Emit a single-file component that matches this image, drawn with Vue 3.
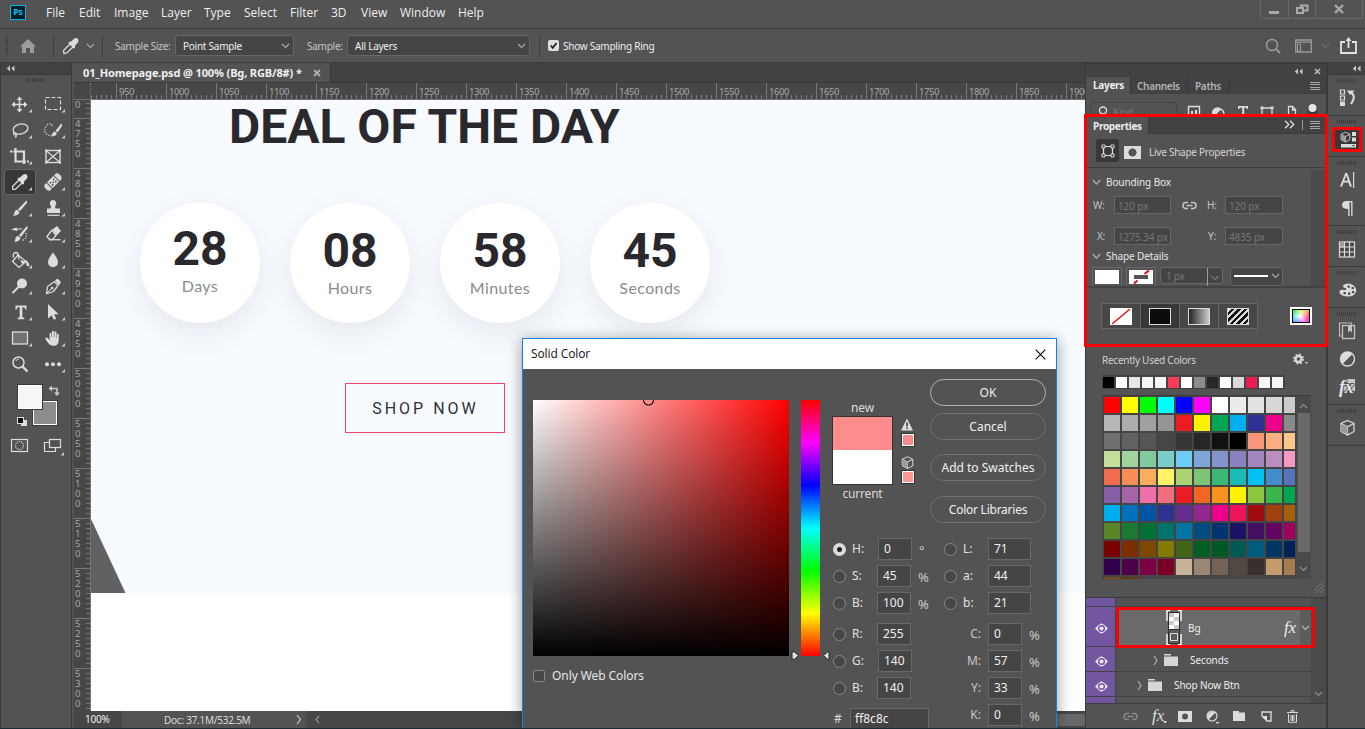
<script setup>
const menus = ['File', 'Edit', 'Image', 'Layer', 'Type', 'Select', 'Filter', '3D', 'View', 'Window', 'Help']

const L = '#dcdcdc'
const dropper = `<path d="M9 20.500L8.500 17.500L15.500 10.500L18.500 13.500L11.500 20.200Z" fill="none" stroke="${L}" stroke-width="1.300"/><path d="M14 9L16 8.500L19 5.800Q21.500 4.300 23 6Q24.500 8 22.500 10L20 12.800L20 15L18.700 15.500L13.500 10.300Z" fill="${L}"/>`
const tools = [
  { id: 'move', art: `<path d="M15.500 7v13M9 13.500h13" stroke="${L}" stroke-width="1.500"/><path d="M15.500 5.500l3 3.500h-6zM15.500 21.500l3-3.500h-6zM7.500 13.500l3.500-3v6zM23.500 13.500l-3.500-3v6z" fill="${L}"/>` },
  { id: 'marquee', art: `<rect x="8.500" y="6.500" width="15" height="12" fill="none" stroke="${L}" stroke-width="1.200" stroke-dasharray="4 2"/>` },
  { id: 'lasso', art: `<ellipse cx="16.500" cy="12" rx="7.500" ry="5" transform="rotate(-12 16.500 12)" fill="none" stroke="${L}" stroke-width="1.400"/><path d="M10 15.500q-1.500 2 1 2.500q2 0 .5-2M12 17.500q1 2-1 3" fill="none" stroke="${L}" stroke-width="1.200"/>` },
  { id: 'quick', art: `<path d="M15.500 8.500q-3-3.500-6 0q-3.500 5 0 8.500q2.500 2.500 5 .5" fill="none" stroke="${L}" stroke-width="1.200" stroke-dasharray="1.300 1.300"/><path d="M25 6.500V9L20.500 15.500L18.500 13.800L23.800 7.300Z" fill="${L}"/><path d="M17.800 14.500l2 2q-.8 3-6 3q2-1.500 1.800-3.500q.8-1.500 2.200-1.500z" fill="${L}"/>` },
  { id: 'crop', art: `<path d="M9.500 8.500h10.500v12.500M11.500 5v13.500H22" fill="none" stroke="${L}" stroke-width="2.200"/><path d="M6 7.500h2.500v2H6zM23 17.500h2v2h-2z" fill="${L}"/>` },
  { id: 'frame', art: `<rect x="9" y="7.500" width="14" height="12" fill="none" stroke="${L}" stroke-width="1.400"/><path d="M9 7.500l14 12M23 7.500l-14 12" stroke="${L}" stroke-width="1.200"/><path d="M8 6.500h2v2H8zM22 6.500h2v2h-2zM8 18.500h2v2H8zM22 18.500h2v2h-2z" fill="${L}"/>`, flat: true },
  { id: 'eyedropper', art: dropper, on: true },
  { id: 'heal', art: `<g transform="rotate(-45 16 13)"><path d="M10 9.500H9q-2.500 0-2.500 3.500T9 16.500h1zM22 9.500h1q2.500 0 2.500 3.500T23 16.500h-1z" fill="${L}" stroke="${L}"/><rect x="11.500" y="9" width="9" height="8" fill="${L}"/><path d="M13 11h1.500v1.500H13zM17.500 11H19v1.500h-1.500zM13 14h1.500v1.500H13zM17.500 14H19v1.500h-1.500zM15.300 12.500h1.400v1.400h-1.400z" fill="#444"/></g>` },
  { id: 'brush', art: `<path d="M23 5.500V8L16 16L14 14.200L21.500 6.500Z" fill="${L}"/><path d="M13.200 14.800l2.300 2.200q-.8 4-6.800 3.800q2-1.500 1.700-3.600q.8-2.300 2.800-2.400z" fill="${L}"/>` },
  { id: 'stamp', art: `<path d="M16 5a3.300 3.300 0 0 1 2.500 5.500q-1 2 .2 3H23v4.500H10v-4.500h3.500q1-1 .1-3A3.300 3.300 0 0 1 16 5z" fill="${L}"/><path d="M10.500 20.300h12" stroke="${L}" stroke-width="1.200"/>` },
  { id: 'history', art: `<path d="M23.500 5V7.500L17 16L15 14.200L22 6Z" fill="${L}"/><path d="M14.200 14.800l2.300 2.200q-.8 4-6.500 3.800q1.700-1.500 1.400-3.600q.8-2.300 2.800-2.400zM7 8.500l5.500-2l1 3.500z" fill="${L}"/><path d="M12 8h6" stroke="${L}"/><path d="M22 12q2 5-4 7.500" fill="none" stroke="${L}" stroke-width="1.200" stroke-dasharray="1.300 1.300"/>` },
  { id: 'eraser', art: `<path d="M15.500 8.500L20 5L24 10L19.500 14.500Z" fill="${L}"/><path d="M15 9L10 15.500L12.500 18.500H15.500L19 14.500Z" fill="none" stroke="${L}" stroke-width="1.300"/><path d="M12 18.700h11.500" stroke="${L}" stroke-width="1.300"/>` },
  { id: 'bucket', art: `<path d="M14 8L22 14.500L15 20.500L8.500 14.500Z" fill="none" stroke="${L}" stroke-width="1.300"/><path d="M21.500 13q3.500 1.500 4 6q-2.500 1-3-1zM16 13l5.500 1.500l-3 3z" fill="${L}"/><path d="M9.500 10.500q-1-5 2.500-5q3 .3 3 7" fill="none" stroke="${L}" stroke-width="1.300"/>` },
  { id: 'blur', art: `<path d="M16 5.500q5 6.500 5 9.800a5 5 0 0 1-10 0q0-3.300 5-9.800z" fill="${L}"/>` },
  { id: 'dodge', art: `<circle cx="18" cy="10.500" r="5" fill="${L}"/><path d="M15 13.500l-6.500 6.500" stroke="${L}" stroke-width="2"/>` },
  { id: 'pen', art: `<path d="M9.500 20.500L10.500 13.500L17.500 8.500L21 12.500L16.500 18.500Z" fill="none" stroke="${L}" stroke-width="1.300"/><path d="M18 7.500L20.500 5.500L24 9L22 12.500ZM14 14h2.300v2.300H14z" fill="${L}"/><path d="M9.500 20.500l5-5" stroke="${L}"/>` },
  { id: 'type', art: `<path d="M11.500 6.500h11v4h-1.200q-.3-2.300-1.500-2.300h-1.500v9.600q0 1 2 1v1.500h-6.600v-1.500q2 0 2-1V8.200h-1.500q-1.200 0-1.500 2.300h-1.200z" fill="${L}"/>` },
  { id: 'select', art: `<path d="M11 5v14.500l3.600-3.300l2.300 4.600l2.300-1.100l-2.200-4.500h4.700z" fill="${L}"/>` },
  { id: 'rect', art: `<rect x="8.500" y="7" width="15" height="12" fill="#737373" stroke="${L}" stroke-width="1.300"/>` },
  { id: 'hand', art: `<path d="M12.500 19.500Q9 15.500 8.300 13.500q.5-1.600 2.300-.5l2 2V8.500q1-1.500 1.800 0V12h.5V6.500q1-1.500 2 0V12h.5V7q1-1.500 2 0v5.500h.5V9.500q1-1.300 1.900 0V15q0 3.500-2.500 5.500q-4.300 1-6.800-1z" fill="${L}"/>` },
  { id: 'zoom', art: `<circle cx="14.500" cy="11.500" r="5.500" fill="none" stroke="${L}" stroke-width="1.500"/><path d="M18.500 15.500l5 5" stroke="${L}" stroke-width="2.400"/><path d="M12 10a3 3 0 0 1 3-2" fill="none" stroke="${L}"/>`, flat: true },
  { id: 'more', art: `<circle cx="10" cy="13.300" r="2" fill="${L}"/><circle cx="16" cy="13.300" r="2" fill="${L}"/><circle cx="22" cy="13.300" r="2" fill="${L}"/>` },
]

const hTicks = Array.from({ length: 20 }, (_, i) => 950 + i * 50)
const vTicks = ['0', ...Array.from({ length: 12 }, (_, i) => String(4750 + i * 50))]

const timers = [['28', 'Days'], ['08', 'Hours'], ['58', 'Minutes'], ['45', 'Seconds']]
const leftRows = [['H:', '0', '°'], ['S:', '45', '%'], ['B:', '100', '%'], ['R:', '255', ''], ['G:', '140', ''], ['B:', '140', '']]
const labRows = [['L:', '71'], ['a:', '44'], ['b:', '21']]
const cmykRows = [['C:', '0'], ['M:', '57'], ['Y:', '33'], ['K:', '0']]

const recent = ['#000', '#fff', '#e6e6e6', '#f6f6f6', '#f6f6f6', '#ff3c55', '#fff', '#8c8c8c', '#282828', '#fff', '#d8d8d8', '#e91e50', '#f6f6f6', '#f6f6f6']
const swatches = [
  '#ff0000 #ffff00 #00ff00 #00ffff #0000ff #ff00ff #ffffff #ebebeb #e1e1e1 #d7d7d7 #cccccc',
  '#b7b7b7 #acacac #a0a0a0 #959595 #ed1c24 #fff200 #00a651 #00aeef #2e3192 #ec008c #898989',
  '#707070 #626262 #555555 #464646 #363636 #262626 #111111 #000000 #f7977a #f9ad81 #fdc68a',
  '#c4df9b #a2d39c #82ca9d #7bcdc8 #6ecff6 #7ea7d8 #8493ca #8882be #a187be #bc8dbf #f49ac2',
  '#f26c4f #f68e55 #fbaf5c #fff467 #acd373 #7cc576 #3bb878 #1abbb4 #00bff3 #438cca #5574b9',
  '#855fa8 #a763a8 #f06ea9 #f26d7d #ed1c24 #f26522 #f7941d #fff200 #8dc73f #39b54a #00a651',
  '#00aeef #0072bc #0054a6 #2e3192 #662d91 #92278f #ec008c #ed145b #9e0b0f #a0410d #a36209',
  '#598527 #1a7b30 #007236 #00746b #0076a3 #004b80 #003471 #1b1464 #440e62 #630460 #9e005d',
  '#790000 #7b2e00 #7d4900 #827b00 #406618 #005e20 #005826 #005952 #005b7f #003663 #002157',
  '#32004b #4b0049 #7b0046 #7a0026 #c7b299 #998675 #736357 #534741 #37302d #c69c6d #a67c52',
  '#754c24 #603913',
].map(r => r.split(' '))

const eye = '<path d="M1 6Q6 .5 8 .5T15 6Q10 11.500 8 11.500T1 6z" fill="#eee6f8"/><circle cx="8" cy="6" r="3.900" fill="#7356a0"/><circle cx="8" cy="6" r="2.300" fill="#eee6f8"/>'
const cube = '<path d="M8 1l6.500 3v8L8 15.500L1.500 12V4z" fill="none" stroke="#dcdcdc" stroke-width="1.200"/><path d="M1.500 4L8 7.300L14.500 4M8 7.300v8" fill="none" stroke="#dcdcdc" stroke-width="1.200"/><path d="M2 4.500L8 7.500V15L2 12z" fill="#9a9a9a"/>'
const dock = [
  [{ id: 'history', art: '<path d="M2.500 2h4v4h-4zM2.500 8h4v4h-4z" fill="none" stroke="#dcdcdc" stroke-width="1.200"/><path d="M2 13.500h5V18H2zM9 2.500h7.500L12 7z" fill="#dcdcdc"/><path d="M12 4q7 3 1 12" fill="none" stroke="#dcdcdc" stroke-width="2"/>' }],
  [{ id: 'props', art: '<g transform="translate(1 1.500) scale(.68)">' + cube + '</g><path d="M13 2h4v4h-4zM13 7.500h4v4h-4zM2 14h15v3.500H2z" fill="#dcdcdc"/><path d="M13 15h3l-1.500 1.500z" fill="#333"/>' }],
  [{ id: 'char', art: '<path d="M2 16.500L7.300 3h1.900l4.800 13.500h-2.200l-1.400-4H5.600l-1.500 4zM6.200 10.700h3.700L8.200 5.500zM15 2h1.200v16H15z" fill="#dcdcdc"/>' },
    { id: 'para', art: '<path d="M14.500 3v15h-1.300V4.300H11.500V18h-1.300v-7Q4 11 4 7t5-4z" fill="#dcdcdc"/>' }],
  [{ id: 'grid', art: '<rect x="1.500" y="2" width="15" height="15" fill="#474747" stroke="#dcdcdc" stroke-width="1.200"/><path d="M2 2.500h5v5H2z" fill="#9a9a9a"/><path d="M6.500 2v15M11.500 2v15M1.500 7h15M1.500 12h15" stroke="#dcdcdc" stroke-width="1.200"/>' }],
  [{ id: 'palette', art: '<path d="M5 5.500Q9 2 14 4.500q5 3 4 7.500q-2 4.500-8 4.500q-7 0-8.500-4q0-3.500 4-2.500q3.500.5 2.500-2q-3 .5-3-2.500z" fill="#dcdcdc"/><path d="M9.500 5.500h2.300v2.300H9.500zM13.500 7h2.300v2.300h-2.300zM14 11h2.300v2.300H14zM10 12.500h2.300v2.300H10zM5.500 12h2.300v2.300H5.500z" fill="#4a4a4a"/>' }],
  [{ id: 'lib', art: '<path d="M4 15H1.500V2h12v2" fill="none" stroke="#b8b8b8" stroke-width="1.200"/><rect x="4.500" y="4.500" width="12" height="13" fill="none" stroke="#c4c4c4" stroke-width="1.300"/><path d="M10 5h4v6.500l-2-1.800l-2 1.800z" fill="#c4c4c4"/>' },
    { id: 'adjust', art: '<circle cx="9.500" cy="10" r="7" fill="none" stroke="#dcdcdc" stroke-width="1.400"/><path d="M14.500 5a7 7 0 0 0-10 10z" fill="#dcdcdc"/>' },
    { id: 'styles', art: '<path d="M5 2h12v12H5z" fill="#c8c8c8"/><text x="1" y="15.500" font-size="18" font-style="italic" font-weight="bold" font-family="Liberation Serif, serif" fill="#e6e6e6" stroke="#535353" stroke-width="2" paint-order="stroke">fx</text>' }],
  [{ id: 'cube', art: '<g transform="translate(1.500 1.500)">' + cube + '</g>' }],
]
</script>

<template>
  <div class="app">
    <header class="menubar">
      <div class="ps">Ps</div>
      <nav class="menus"><span v-for="m in menus" :key="m">{{ m }}</span></nav>
      <div class="winbtns">
        <i><svg width="27" height="18"><path d="M8 11h10v3H8z" fill="#a9a9a9" /></svg></i>
        <i><svg width="26" height="18"><path d="M8 8h6v5H8zM12 8V5.500h6.500v5H14" fill="none" stroke="#a9a9a9" stroke-width="2" /></svg></i>
        <i><svg width="47" height="18"><path d="M19 5l8 8M27 5l-8 8" stroke="#a9a9a9" stroke-width="2.400" /></svg></i>
      </div>
    </header>

    <div class="options">
      <div class="vgrip"></div>
      <svg class="home" width="18" height="16"><path d="M9 1L17 8.500H15V15H11V10H7V15H3V8.500H1Z" fill="#9c9c9c" /></svg>
      <b class="sep"></b>
      <svg class="drop" width="18" height="18" viewBox="7 4 18 18" v-html="dropper"></svg>
      <svg class="chev" width="9" height="6"><path d="M1 1l3.500 3.500L8 1" fill="none" stroke="#a8a8a8" stroke-width="1.200" /></svg>
      <b class="sep sep2"></b>
      <span class="lab">Sample Size:</span>
      <div class="sel w1"><span>Point Sample</span><svg width="9" height="6"><path d="M1 1l3.500 3.500L8 1" fill="none" stroke="#a8a8a8" stroke-width="1.200" /></svg></div>
      <span class="lab l2">Sample:</span>
      <div class="sel w2"><span>All Layers</span><svg width="9" height="6"><path d="M1 1l3.500 3.500L8 1" fill="none" stroke="#a8a8a8" stroke-width="1.200" /></svg></div>
      <b class="sep sep3"></b>
      <svg class="check" width="11" height="11"><rect width="11" height="11" rx="2" fill="#dedede" /><path d="M2.800 5.500l2 2.300L8.500 3" fill="none" stroke="#222" stroke-width="1.800" /></svg>
      <span class="ring">Show Sampling Ring</span>
      <svg class="find" width="16" height="16"><circle cx="7" cy="7" r="5.500" fill="none" stroke="#9a9a9a" stroke-width="1.400" /><path d="M11 11l4 4" stroke="#9a9a9a" stroke-width="1.800" /></svg>
      <svg class="space" width="17" height="14"><path d="M.7 1h15.600v12H.7zM1 3.200h15" fill="none" stroke="#9a9a9a" stroke-width="1.300" /><path d="M2.500 5h3v7h-3z" fill="none" stroke="#9a9a9a" /></svg>
      <svg class="dim" width="9" height="6"><path d="M1 1l3.500 3.500L8 1" fill="none" stroke="#6e6e6e" stroke-width="1.200" /></svg>
      <svg class="share" width="17" height="17"><path d="M5 5H1v11h15V5h-4M8.500 11V2" fill="none" stroke="#e2e2e2" stroke-width="1.800" /><path d="M5.500 4L8.500 0l3 4z" fill="#e2e2e2" /></svg>
    </div>

    <main class="main">
      <aside class="toolbar">
        <div class="colhead"><svg width="9" height="7"><path d="M4 .5L.8 3.500L4 6.500zM8.500 .5L5.300 3.500L8.500 6.500z" fill="#c6c6c6" /></svg></div>
        <div class="grip"></div>
        <div class="tools">
          <div v-for="t in tools" :key="t.id" class="tool" :class="{ on: t.on }">
            <svg width="32" height="26"><g v-html="t.art"></g><path v-if="!t.flat" d="M28 18v3.500h-3.500z" fill="#c8c8c8" /></svg>
          </div>
        </div>
        <svg class="colors" width="60" height="78">
          <rect x="28.500" y="18.500" width="25" height="25" fill="#8c8c8c" stroke="#3b3b3b" /><rect x="29.500" y="19.500" width="23" height="23" fill="none" stroke="#fff" />
          <rect x="13.500" y="2.500" width="25" height="25" fill="#f6f6f6" stroke="#3b3b3b" /><rect x="14.500" y="3.500" width="23" height="23" fill="none" stroke="#fff" />
          <path d="M47 6.500h6V11" fill="none" stroke="#c8c8c8" stroke-width="1.600" /><path d="M44.500 6.500L48 3.500v6zM53 14l-3-3.500h6z" fill="#c8c8c8" />
          <path d="M17 38h6v6h-6z" fill="#dcdcdc" /><rect x="13.500" y="35.500" width="6" height="6" fill="#111" stroke="#ddd" />
          <rect x="7.500" y="57.500" width="16" height="12" fill="none" stroke="#dcdcdc" stroke-width="1.200" /><circle cx="15.500" cy="63.500" r="4" fill="none" stroke="#dcdcdc" stroke-dasharray="1 1" stroke-width="1.200" />
          <rect x="45.500" y="57.500" width="11" height="8" fill="none" stroke="#dcdcdc" stroke-width="1.200" /><path d="M45 60.500h-4.500v9h11V66" fill="none" stroke="#dcdcdc" stroke-width="1.200" /><path d="M60 70v3.500h-3.500z" fill="#c8c8c8" />
        </svg>
      </aside>

      <section class="doc">
        <div class="tabs"><div class="tab"><span>01_Homepage.psd @ 100% (Bg, RGB/8#) *</span><svg width="8" height="8"><path d="M1 1l6 6M7 1L1 7" stroke="#b0b0b0" stroke-width="1.800" /></svg></div></div>
        <div class="hruler"><div class="corner"></div><div class="htrack"><span v-for="n in hTicks" :key="n">{{ n }}</span></div></div>
        <div class="mid">
          <div class="vruler"><span v-for="n in vTicks" :key="n"><em v-for="(d, i) in n" :key="i">{{ d }}</em></span></div>
          <div class="canvas">
            <h1>DEAL OF THE DAY</h1>
            <div class="timers">
              <div v-for="t in timers" :key="t[1]" class="timer" :class="t[1].toLowerCase()"><strong>{{ t[0] }}</strong><span>{{ t[1] }}</span></div>
            </div>
            <div class="shop">SHOP NOW</div>
            <svg class="wedge" width="35" height="74"><path d="M0 0L34.500 74H0Z" fill="#606163" /></svg>
          </div>
        </div>
        <div class="status"><span class="pct">100%</span><span class="size">Doc: 37.1M/532.5M</span><svg width="6" height="11"><path d="M1 1l3.500 4.500L1 10" fill="none" stroke="#c8c8c8" stroke-width="1.200" /></svg><div class="hscroll"><svg width="5" height="9"><path d="M4 1L1 4.500L4 8" fill="none" stroke="#8c8c8c" stroke-width="1.200" /></svg><i></i></div></div>
      </section>

      <aside class="panels">
        <div class="phead"><svg width="9" height="7"><path d="M4 .5L.8 3.500L4 6.500zM8.500 .5L5.300 3.500L8.500 6.500z" fill="#c6c6c6" /></svg><svg width="7" height="7"><path d="M1 1l5 5M6 1L1 6" stroke="#b8b8b8" stroke-width="1.700" /></svg></div>
        <div class="ptabs"><b>Layers</b><span class="ch">Channels</span><span class="pa">Paths</span><i class="burger"></i></div>
        <div class="filter">
          <div class="kind"><svg width="10" height="12"><circle cx="5" cy="5.500" r="3.500" fill="none" stroke="#dcdcdc" stroke-width="1.400" /></svg>Kind</div>
          <svg width="134" height="20"><path d="M1.500 20V5.500h11V20M26.500 13a5 5 0 0 1 10.500 0" fill="none" stroke="#dcdcdc" stroke-width="1.400" /><path d="M34.500 8a5 5 0 0 0-8 8zM4 10h2v3H4zM8 9h2v4H8zM51 5h10v3h-1.500V6.800h-2.300V20h-2V6.800h-2.700V8H51z" fill="#dcdcdc" /><path d="M76 7h8M75 9v9M85 9v9M101.500 18V5.500h4l3 3V18M105.500 5v4h3.500" fill="none" stroke="#dcdcdc" stroke-width="1.300" /><path d="M73.500 5.500h3v3h-3zM83.500 5.500h3v3h-3z" fill="#dcdcdc" /><rect x="121" y="3" width="9" height="18" rx="4" fill="#3c3c3c" /><circle cx="125.500" cy="7" r="4" fill="#e6e6e6" /></svg>
        </div>

        <div class="props">
          <div class="ptabs prop"><b>Properties</b><svg width="11" height="9"><path d="M1 .8L4.800 4.500L1 8.200M6 .8L9.800 4.500L6 8.200" fill="none" stroke="#e0e0e0" stroke-width="1.300" /></svg><em></em><i class="burger"></i></div>
          <div class="live">
            <div class="box"><svg width="14" height="14"><path d="M2.500 2.500h9v9h-9z" fill="none" stroke="#dcdcdc" stroke-width="1.200" /><path d="M1 1h3v3H1zM10 1h3v3h-3zM1 10h3v3H1zM10 10h3v3h-3z" fill="#383838" stroke="#dcdcdc" /></svg></div>
            <div class="mask"></div><span>Live Shape Properties</span>
          </div>
          <div class="scrollarea">
            <div class="fields">
              <div class="sect"><svg width="9" height="7"><path d="M.8 1l3.700 4L8.200 1" fill="none" stroke="#b0b0b0" stroke-width="1.200" /></svg>Bounding Box</div>
              <div class="frow r1"><label>W:</label><div class="inp">120 px</div><svg width="15" height="9"><path d="M6 1.500H4a3 3 0 0 0 0 6h2M9 1.500h2a3 3 0 0 1 0 6H9M4.500 4.500h6" fill="none" stroke="#c6c6c6" stroke-width="1.500" /></svg><label class="h">H:</label><div class="inp">120 px</div></div>
              <div class="frow r2"><label>X:</label><div class="inp">1275.34 px</div><label class="h">Y:</label><div class="inp">4835 px</div></div>
              <div class="sect details"><svg width="9" height="7"><path d="M.8 1l3.700 4L8.200 1" fill="none" stroke="#b0b0b0" stroke-width="1.200" /></svg>Shape Details</div>
              <div class="strokes">
                <div class="sw"><i></i></div>
                <div class="sw"><svg width="24" height="14"><path d="M0 0h24v14H0z" fill="#fff" /><path d="M5 13.500L8.500 10.500M15.500 4L20 .5" stroke="#e01818" stroke-width="2.200" /><path d="M5 5h14v4H5z" fill="#535353" /></svg></div>
                <div class="one"><span>1 px</span><svg width="15" height="18"><path d="M.5 0v18M4.500 8l3.500 3.500L11.500 8" fill="none" stroke="#9c9c9c" /></svg></div>
                <div class="line"><i></i><svg width="9" height="6"><path d="M1 1l3.500 3.500L8 1" fill="none" stroke="#a8a8a8" stroke-width="1.200" /></svg></div>
              </div>
            </div>
            <div class="track"></div>
          </div>
          <div class="fills">
            <div class="seg"><svg width="22" height="17"><path d="M0 0h22v17H0z" fill="#fff" /><path d="M2 16L20 1" stroke="#e01818" stroke-width="1.600" /></svg></div>
            <div class="seg on"><i class="solid"></i></div>
            <div class="seg"><i class="grad"></i></div>
            <div class="seg"><i class="pat"></i></div>
            <div class="pick"><i></i></div>
          </div>
          <div class="frame"></div>
        </div>

        <div class="recent">
          <div class="rtitle"><span>Recently Used Colors</span><svg width="16" height="12"><circle cx="5.500" cy="6" r="3" fill="none" stroke="#d8d8d8" stroke-width="2.400" /><circle cx="5.500" cy="6" r="4.700" fill="none" stroke="#d8d8d8" stroke-width="1.600" stroke-dasharray="1.850 1.850" /><path d="M12 9h3l-1.500 2z" fill="#d8d8d8" /></svg></div>
          <div class="rrow"><i v-for="(c, i) in recent" :key="i" :style="{ background: c }"></i></div>
          <div class="swbox">
            <div class="grid"><div v-for="(r, i) in swatches" :key="i" class="srow"><i v-for="(c, k) in r" :key="k" :style="{ background: c }"></i></div></div>
            <div class="sbar"><svg width="9" height="6"><path d="M1 5l3.500-3.500L8 5" fill="none" stroke="#8c8c8c" stroke-width="1.200" /></svg><i></i><svg width="9" height="6"><path d="M1 1l3.500 3.500L8 1" fill="none" stroke="#8c8c8c" stroke-width="1.200" /></svg></div>
          </div>
          <svg class="resize" width="11" height="11"><path d="M1 9L9 1M3 11L11 3M7 11l4-4" stroke="#7c7c7c" /></svg>
        </div>

        <div class="layers">
          <div class="lrows">
            <div class="lrow first"><div class="eye"></div></div>
            <div class="lrow active">
              <div class="eye"><svg width="15" height="11" viewBox="0 0 16 12" v-html="eye"></svg></div>
              <div class="lbody">
                <svg class="thumb" width="16" height="37"><path d="M1 12V1.500h3M12 1.500h3V12M1 25v10.500h3M12 35.500h3V25" fill="none" stroke="#fff" stroke-width="1.400" /><rect x="2.500" y="3.500" width="11" height="31" fill="#5c5c5c" stroke="#2c2c2c" /><path d="M3 4h10v16H3z" fill="#fff" /><path d="M3 4h5v4H3zM8 8h5v4H8zM3 12h5v4H3zM8 16h5v4H8z" fill="#c9c9c9" /><path d="M2 20.500h12" stroke="#2c2c2c" /><path d="M4.500 24.500h7v7h-7z" fill="none" stroke="#dcdcdc" /></svg>
                <span>Bg</span><em>fx</em><svg class="cv" width="9" height="6"><path d="M1 1l3.500 3.500L8 1" fill="none" stroke="#b8b8b8" stroke-width="1.200" /></svg>
              </div>
            </div>
            <div class="lrow g1"><div class="eye"><svg width="15" height="11" viewBox="0 0 16 12" v-html="eye"></svg></div><div class="lbody"><svg class="gt" width="5" height="11"><path d="M1 1l3 4.500L1 10" fill="none" stroke="#b0b0b0" stroke-width="1.200" /></svg><svg class="fold" width="14" height="12"><path d="M0 0h7v1.500H0zM0 2.500h14V12H0z" fill="#d6d6d6" /></svg><span>Seconds</span></div></div>
            <div class="lrow g2"><div class="eye"><svg width="15" height="11" viewBox="0 0 16 12" v-html="eye"></svg></div><div class="lbody"><svg class="gt" width="5" height="11"><path d="M1 1l3 4.500L1 10" fill="none" stroke="#b0b0b0" stroke-width="1.200" /></svg><svg class="fold" width="14" height="12"><path d="M0 0h7v1.500H0zM0 2.500h14V12H0z" fill="#d6d6d6" /></svg><span>Shop Now Btn</span></div></div>
            <div class="lrow last"><div class="eye"></div></div>
          </div>
          <div class="lscroll"><svg width="9" height="6"><path d="M1 1l3.500 3.500L8 1" fill="none" stroke="#8c8c8c" stroke-width="1.200" /></svg></div>
          <div class="redrow"></div>
        </div>
        <div class="pfoot">
          <svg width="15" height="9"><path d="M6 1.500H4a3 3 0 0 0 0 6h2M9 1.500h2a3 3 0 0 1 0 6H9M4.500 4.500h6" fill="none" stroke="#8a8a8a" stroke-width="1.400" /></svg>
          <em>fx</em><svg class="dot" width="4" height="3"><path d="M0 0h4L2 2.500z" fill="#e6e6e6" /></svg>
          <svg class="f3" width="14" height="11"><path d="M0 0h14v11H0z" fill="#dcdcdc" /><circle cx="7" cy="5.500" r="3" fill="#535353" /></svg>
          <svg class="f4" width="14" height="15"><circle cx="6" cy="7" r="5" fill="none" stroke="#dcdcdc" stroke-width="1.200" /><path d="M9.500 3.500a5 5 0 0 0-7 7zM9.500 13h4L11.500 15z" fill="#dcdcdc" /></svg>
          <svg class="f5" width="12" height="10"><path d="M0 0h6v1.500h6V10H0z" fill="#dcdcdc" /></svg>
          <svg class="f6" width="11" height="11"><path d="M1 1h9v9H6L1 5z" fill="none" stroke="#dcdcdc" stroke-width="1.300" /><path d="M1 5h5v5z" fill="#dcdcdc" /></svg>
          <svg class="f7" width="11" height="13"><path d="M0 2.500h11M4 2V.7h3V2M1.500 4v8.300h8V4M4 5v6M5.500 5v6M7 5v6" fill="none" stroke="#dcdcdc" /></svg>
        </div>
      </aside>

      <aside class="dock">
        <div class="colhead right"><svg width="9" height="7"><path d="M4 .5L.8 3.500L4 6.500zM8.500 .5L5.300 3.500L8.500 6.500z" fill="#c6c6c6" /></svg></div>
        <div v-for="(g, i) in dock" :key="i" class="dgroup"><div class="grip"></div><div v-for="d in g" :key="d.id" class="dicon" :class="d.id"><svg width="19" height="20" v-html="d.art"></svg></div></div>
      </aside>
    </main>
    <div class="edge"></div>

    <div class="dialog">
      <div class="dtitle"><span>Solid Color</span><svg width="11" height="11"><path d="M.7 .7l9.600 9.600M10.300 .7L.7 10.300" stroke="#000" stroke-width="1.100" /></svg></div>
      <div class="dbody">
        <div class="pickcol">
          <div class="pickers">
            <div class="field"><svg width="256" height="256"><circle cx="115.500" cy="0" r="5" fill="none" stroke="#000" stroke-width="1.100" /></svg></div>
            <div class="hue"></div>
            <svg class="arrows" width="40" height="9"><path d="M1 1l2.500 0L7.500 4.500L3.500 8.200H1zM38 1h-1.500L32.500 4.500L36.500 8.200h1.500z" fill="#e4e4e4" stroke="#222" /></svg>
          </div>
          <div class="web"><i></i>Only Web Colors</div>
        </div>
        <div class="side">
          <div class="upper">
            <div class="cmp"><span>new</span><div class="cbox"><i></i></div><span class="cur">current</span></div>
            <div class="warns">
              <svg width="12" height="13"><path d="M6 .5L12 12.500H0z" fill="#dcdcdc" /><path d="M5.300 4.500h1.500v4H5.300zM5.300 9.500h1.500V11H5.300z" fill="#333" /></svg><i></i>
              <svg class="c3" width="13" height="13" viewBox="0 0 16 16" v-html="cube"></svg><i class="w2"></i>
            </div>
            <div class="btns"><button class="ok">OK</button><button>Cancel</button><button class="add">Add to Swatches</button><button class="lib">Color Libraries</button></div>
          </div>
          <div class="values">
            <div class="vl">
              <div v-for="(r, i) in leftRows" :key="i" class="vrow" :class="{ gapd: i === 3, nudge: i % 4 === 0 }"><s :class="{ on: i === 0 }"></s><label>{{ r[0] }}</label><div class="vin">{{ r[1] }}</div><u>{{ r[2] }}</u></div>
              <div class="hex"><label>#</label><div>ff8c8c</div></div>
            </div>
            <div class="vr">
              <div v-for="r in labRows" :key="r[0]" class="vrow"><s></s><label>{{ r[0] }}</label><div class="vin wide">{{ r[1] }}</div></div>
              <div v-for="(r, i) in cmykRows" :key="r[0]" class="vrow cm" :class="{ gapd: i === 0 }"><label>{{ r[0] }}</label><div class="vin">{{ r[1] }}</div><u>%</u></div>
            </div>
          </div>
        </div>
      </div>
    </div>
    <div class="redicon"></div>
  </div>
</template>

<style scoped>
* { box-sizing: border-box; }
svg { display: block; flex: none; }
i, em, u, s { font-style: normal; text-decoration: none; }
.app { position: relative; width: 1365px; height: 729px; overflow: hidden; background: #535353; color: #dcdcdc; font: 10px/14px "Noto Sans", sans-serif; letter-spacing: -.25px; white-space: nowrap; display: flex; flex-direction: column; }

.menubar { height: 29px; flex: none; border-bottom: 1px solid #3c3c3c; display: flex; padding-left: 10px; }
.ps { width: 16px; height: 15px; margin-top: 5px; background: #001d26; border: 1px solid #00b4e6; color: #00c8ff; font: bold 8.5px/12px "Open Sans", sans-serif; letter-spacing: 0; text-align: center; }
.menus { margin-left: 20px; display: grid; grid-template-columns: 33px 35px 47px 43px 40px 46px 41px 30px 39px 58px 40px; font: 12px/26px "Open Sans", sans-serif; letter-spacing: 0; color: #eee; }
.winbtns { margin-left: auto; margin-right: 2px; width: 103px; height: 19px; border: 1px solid #686868; border-top: 0; border-radius: 0 0 3px 3px; display: flex; overflow: hidden; }
.winbtns i + i { border-left: 1px solid #686868; }

.options { height: 34px; flex: none; border-bottom: 1px solid #3a3a3a; display: flex; align-items: center; padding-left: 5px; }
.vgrip { width: 3px; height: 20px; background: repeating-linear-gradient(#3e3e3e 0 1px, #535353 1px 2px); }
.home { margin-left: 11px; }
.sep { width: 1px; height: 22px; background: #3e3e3e; margin-left: 16px; }
.drop { margin-left: 8px; }
.chev { margin-left: 6px; }
.sep2 { margin-left: 7px; }
.lab { color: #c4c4c4; margin-left: 12px; width: 60px; }
.l2 { margin-left: 13px; width: 40px; }
.sel { height: 21px; background: #454545; border: 1px solid #666; border-radius: 3px; display: flex; align-items: center; justify-content: space-between; padding: 0 3px 0 7px; color: #f0f0f0; }
.w1 { width: 119px; }
.w2 { width: 183px; }
.sep3 { margin-left: 9px; }
.check { margin-left: 8px; }
.ring { margin-left: 4px; color: #eee; }
.find { margin-left: auto; }
.space { margin-left: 14px; }
.dim { margin-left: 9px; }
.share { margin-left: 10px; margin-right: 8px; }

.main { height: 665px; flex: none; display: flex; }
.toolbar { width: 72px; border-left: 1px solid #3b3b3b; border-right: 1px solid #3b3b3b; }
.colhead { height: 12px; background: #424242; border-bottom: 1px solid #3a3a3a; padding: 2px 0 0 5px; }
.grip { width: 19px; height: 4px; margin: 3px 0 0 25px; background: repeating-linear-gradient(90deg, #3c3c3c 0 1px, #535353 1px 2px); }
.tools { margin: 9px 0 0 3px; display: grid; grid-template-columns: 33px 33px; grid-auto-rows: 26px; }
.tool.on { background: #383838; border-radius: 3px; width: 32px; box-shadow: inset 0 0 0 1px #666; }
.colors { margin: 5px 0 0 3px; }

.doc { flex: 1; min-width: 0; margin-left: 2px; display: flex; flex-direction: column; background: #424242; }
.tabs { height: 20px; border-bottom: 1px solid #393939; }
.tab { width: 257px; height: 19px; background: #535353; border-right: 1px solid #393939; padding: 0 9px; display: flex; align-items: center; justify-content: space-between; font-weight: bold; color: #f0f0f0; font-size: 11px; letter-spacing: -.13px; }
.hruler { height: 17px; display: flex; background: #474747; border-bottom: 1px solid #707070; }
.corner { width: 17px; border-right: 1px dotted #777; }
.htrack { flex: 1; overflow: hidden; display: flex; padding-left: 25px; background: repeating-linear-gradient(90deg, #787878 0 1px, transparent 1px 5px) 0 100% / 100% 4px no-repeat; }
.htrack span { flex: 0 0 50px; border-left: 1px solid #787878; font-size: 9.5px; letter-spacing: -.4px; line-height: 17px; color: #a8a8a8; padding-left: 2px; }
.mid { flex: 1; min-height: 0; display: flex; }
.vruler { width: 17px; overflow: hidden; background: repeating-linear-gradient(#787878 0 1px, transparent 1px 5px) 100% 3px / 4px 100% no-repeat #474747; border-right: 1px solid #777; display: flex; flex-direction: column; }
.vruler span { flex: 0 0 50px; border-top: 1px solid #787878; color: #a8a8a8; font-size: 9.5px; display: flex; flex-direction: column; padding-left: 1px; }
.vruler span:first-child { flex-basis: 18px; border-top: 0; }
.vruler em { line-height: 10px; height: 10px; width: 6px; }
.canvas { flex: 1; overflow: hidden; position: relative; background: linear-gradient(#f7faff 0 493px, #fff 493px); letter-spacing: 0; }
h1 { margin: 3px 0 0 138px; font: bold 48px/48px Roboto, sans-serif; color: #29282d; }
.timers { display: flex; gap: 30px; margin: 52px 0 0 49px; }
.timer { width: 120px; height: 120px; border-radius: 50%; background: #fff; box-shadow: 0 10px 30px rgba(40, 40, 60, .09); display: flex; flex-direction: column; align-items: center; padding-top: 24px; }
.timer.days { padding-top: 22px; }
.timer strong { font: bold 48px/48px Roboto, sans-serif; color: #29282d; }
.timer span { font: 16px/20px Lato, sans-serif; color: #8b8b8d; margin-top: 3px; letter-spacing: .4px; }
.shop { width: 160px; height: 50px; border: 1px solid #f4455c; margin: 60px 0 0 254px; font: 16px/49px Roboto, sans-serif; letter-spacing: 3px; text-align: center; text-indent: 1px; color: #303036; }
.wedge { position: absolute; left: 0; top: 419px; }
.status { height: 17px; display: flex; align-items: center; background: #535353; }
.pct { width: 48px; height: 17px; background: #474747; padding-left: 11px; line-height: 17px; color: #eee; }
.size { width: 174px; padding-left: 42px; }
.hscroll { flex: 1; margin-left: 5px; height: 17px; background: #474747; padding-left: 8px; display: flex; align-items: center; justify-content: space-between; }
.hscroll i { width: 29px; height: 12px; background: #686868; }

.panels { width: 243px; flex: none; border-left: 1px solid #3a3a3a; border-right: 2px solid #3a3a3a; display: flex; flex-direction: column; }
.phead { height: 14px; background: #424242; border-top: 1px solid #383838; display: flex; align-items: center; justify-content: flex-end; gap: 11px; padding: 2px 5px 0 0; }
.ptabs { height: 17px; background: #424242; display: flex; align-items: center; color: #b4b4b4; letter-spacing: -.3px; }
.ptabs b { width: 45px; height: 17px; line-height: 17px; background: #535353; padding-left: 7px; border-right: 1px solid #383838; color: #eee; }
.ch, .pa { font-weight: 600; border-right: 1px solid #383838; line-height: 16px; padding-left: 6px; width: 57px; }
.pa { width: 42px; padding-left: 7px; }
.burger { margin-left: auto; margin-right: 6px; width: 10px; height: 8px; background: repeating-linear-gradient(#a8a8a8 0 1px, transparent 1px 2.330px); }
.filter { height: 22px; display: flex; overflow: hidden; padding: 7px 0 0 4px; }
.kind { width: 87px; height: 24px; margin-top: 1px; border: 1px solid #444; border-radius: 3px; display: flex; padding: 2px 0 0 7px; gap: 5px; color: #777; line-height: 15px; margin-right: 10px; }

.props { position: relative; height: 231px; flex: none; }
.frame { position: absolute; left: -2px; top: -2px; width: 244px; height: 233px; border: 3px solid red; }
.ptabs.prop { height: 18px; border-bottom: 1px solid #3a3a3a; }
.prop b { width: 63px; height: 18px; line-height: 20px; }
.prop > svg { margin-left: auto; }
.prop em { width: 1px; height: 10px; background: #999; margin: 0 7px; }
.prop .burger { margin-left: 0; }
.live { height: 34px; border-bottom: 1px solid #3c3c3c; display: flex; align-items: center; padding-left: 10px; color: #d4d4d4; }
.live span { margin-top: 3px; }
.box { width: 23px; height: 23px; background: #383838; border-radius: 3px; display: flex; align-items: center; justify-content: center; }
.mask { width: 17px; height: 13px; margin: 3px 8px 0 5px; background: radial-gradient(circle, #535353 0 3.800px, #dcdcdc 4.300px); }
.scrollarea { height: 120px; border-bottom: 2px solid #424242; display: flex; overflow: hidden; }
.fields { flex: 1; padding-left: 6px; }
.track { width: 15px; background: #4a4a4a; margin-top: 2px; }
.sect { display: flex; align-items: center; gap: 5px; height: 14px; margin-top: 7px; color: #e8e8e8; letter-spacing: -.1px; }
.frow { display: flex; align-items: center; height: 18px; margin-top: 7px; color: #c4c4c4; }
.frow label { width: 22px; padding-left: 1px; }
.r2 { margin-top: 13px; }
.r2 label { padding-left: 5px; }
.inp { width: 57px; height: 18px; border: 1px solid #666; background: #454545; color: #757575; padding-left: 3px; line-height: 18px; letter-spacing: -.1px; }
.frow svg { margin-left: 11px; }
.frow .h { margin-left: 10px; width: 18px; padding-left: 0; }
.r2 .h { margin-left: 37px; width: 17px; }
.frow .h + .inp { width: 58px; }
.sect.details { margin-top: 4px; }
.strokes { display: flex; margin-top: 4px; height: 22px; }
.sw { width: 30px; height: 22px; border: 1px solid #686868; margin-right: 4px; padding: 2px; }
.sw i { display: block; width: 24px; height: 14px; background: #fff; }
.one { width: 63px; height: 17px; background: #454545; border: 1px solid #666; border-radius: 3px; display: flex; justify-content: space-between; color: #757575; padding-left: 5px; line-height: 17px; }
.line { width: 53px; height: 19px; background: #454545; border: 1px solid #666; border-radius: 3px; margin-left: 7px; display: flex; align-items: center; justify-content: space-between; padding: 0 2px 2px 3px; }
.line i { width: 34px; height: 2px; background: #fff; }
.fills { display: flex; padding: 15px 0 0 15px; }
.seg { width: 40px; height: 26px; margin-right: -1px; border: 1px solid #666; background: #474747; display: flex; align-items: center; justify-content: center; }
.seg.on { background: #383838; }
.seg i { width: 22px; height: 17px; border: 1px solid #dcdcdc; }
.solid { background: #0c0c0c; }
.grad { background: linear-gradient(90deg, #222, #ccc); }
.pat { background: repeating-linear-gradient(135deg, #dcdcdc 0 2.200px, #111 2.200px 4.600px); }
.pick { width: 22px; height: 18px; margin: 4px 0 0 33px; background: #fff; padding: 2px; }
.pick i { display: block; width: 18px; height: 14px; border: 1px solid #000; background: radial-gradient(circle at 45% 55%, #fff, transparent 75%), conic-gradient(from 0deg, #e8f060, #ffb060, #ff4090, #ff50ff, #6060ff, #40e0ff, #40f070, #e8f060); }

.recent { position: relative; height: 251px; flex: none; border-bottom: 1px solid #3a3a3a; padding-left: 16px; }
.rtitle { padding-top: 6px; height: 19px; display: flex; justify-content: space-between; padding-right: 17px; color: #d0d0d0; }
.rrow { width: 183px; height: 14px; margin-top: 9px; border: 1px solid #424242; background: #474747; display: flex; gap: 2px; padding: 0; }
.rrow i { width: 11px; height: 11px; margin-top: 1px; }
.swbox { width: 209px; height: 184px; margin-top: 6px; background: #454545; border-top: 1px solid #3c3c3c; display: flex; overflow: hidden; }
.grid { width: 193px; overflow: hidden; padding: 1px 0 0 2px; }
.srow { display: flex; gap: 2px; margin-bottom: 2px; }
.srow i { width: 16px; height: 16px; flex: none; }
.sbar { width: 15px; margin-left: 1px; background: #4a4a4a; display: flex; flex-direction: column; align-items: center; padding-top: 7px; }
.sbar i { width: 12px; height: 139px; background: #6a6a6a; margin: 4px 0 14px; }
.resize { position: absolute; right: 2px; bottom: 4px; }

.layers { position: relative; height: 106px; flex: none; display: flex; border-bottom: 1px solid #3c3c3c; letter-spacing: 0; }
.lrows { flex: 1; overflow: hidden; }
.lscroll { width: 15px; background: #4a4a4a; padding: 93px 0 0 3px; }
.lrow { display: flex; border-bottom: 1px solid #434343; }
.eye { width: 30px; flex: none; background: #7356a0; border-right: 1px solid #434343; display: flex; align-items: center; padding-left: 8px; padding-top: 4px; }
.lbody { flex: 1; display: flex; align-items: center; color: #eee; letter-spacing: -.1px; }
.g1 .lbody, .g2 .lbody { padding-top: 2px; }
.first { height: 9px; }
.active { height: 40px; }
.g1, .g2 { height: 25px; }
.last { height: 9px; }
.active .lbody { background: linear-gradient(90deg, #6a6a6a 184px, #5c5c5c 184px); padding: 2px 0 0 50px; }
.active span { margin-left: 6px; }
.lbody em { margin-left: auto; font: italic 17px/18px "Liberation Serif", serif; margin-right: 5px; }
.cv { margin-right: 1px; }
.g1 .gt { margin-left: 37px; }
.g2 .gt { margin-left: 21px; }
.fold { margin: 0 12px 0 6px; }
.redrow { position: absolute; left: 30px; top: 9px; width: 199px; height: 41px; border: 3px solid red; border-radius: 2px; }
.pfoot { flex: 1; display: flex; align-items: center; padding-left: 37px; letter-spacing: 0; }
.pfoot em { font: italic 17px/18px "Liberation Serif", serif; margin-left: 14px; width: 12px; }
.dot { margin: 12px 0 0 -1px; }
.f3 { margin-left: 11px; }
.f4 { margin-left: 14px; }
.f5 { margin-left: 13px; }
.f6 { margin-left: 16px; }
.f7 { margin-left: 15px; }

.dock { width: 37px; flex: none; }
.dgroup { border-bottom: 1px solid #3a3a3a; overflow: hidden; height: 41px; }
.dgroup .grip { margin: 4px 0 0 9px; }
.dgroup:nth-child(4) { height: 69px; }
.dgroup:nth-child(7) { height: 97px; }
.colhead.right { padding-left: 24px; }
.dicon { padding-left: 10px; margin-top: 5px; height: 23px; }
.dicon.props { margin-left: 5px; padding: 1px 0 0 6px; width: 27px; height: 23px; background: #383838; }
.dicon + .dicon { margin-top: 5px; }
.edge { height: 1px; background: #1a2a33; }
.redicon { position: absolute; left: 1332px; top: 127px; width: 30px; height: 25px; border: 3px solid red; }

.dialog { position: absolute; left: 522px; top: 338px; width: 535px; height: 390px; border: 1px solid #1883d7; border-bottom: 0; background: #535353; box-shadow: 0 2px 14px rgba(0, 0, 0, .4); clip-path: inset(-20px -20px 0 -20px); overflow: hidden; font: 12px/16px "Noto Sans", sans-serif; letter-spacing: 0; color: #dcdcdc; }
.dtitle { height: 30px; background: #fff; color: #111; display: flex; align-items: center; justify-content: space-between; padding: 0 10px 0 8px; font-family: "Open Sans", sans-serif; letter-spacing: -.1px; }
.dbody { display: flex; padding: 10px 0 0 10px; }
.pickcol { padding-top: 21px; width: 299px; }
.pickers { position: relative; display: flex; }
.field { width: 256px; height: 256px; background: linear-gradient(to top, #000, transparent), linear-gradient(to right, #fff, #f00); }
.hue { width: 19px; height: 256px; margin-left: 12px; background: linear-gradient(#f00, #f0f, #00f, #0ff, #0f0, #ff0, #f00); }
.arrows { position: absolute; left: 258px; top: 251px; }
.web { display: flex; align-items: center; margin-top: 12px; color: #e6e6e6; letter-spacing: -.08px; }
.web i { width: 12px; height: 12px; border: 1px solid #8a8a8a; border-radius: 2px; background: #474747; margin-right: 7px; }
.upper { display: flex; height: 154px; }
.cmp { width: 61px; padding-top: 21px; text-align: center; letter-spacing: -.2px; }
.cur { display: block; padding-top: 1px; }
.cbox { width: 61px; height: 69px; border: 1px solid #333; background: #fff; }
.cbox i { display: block; height: 33px; background: #ff8c8c; }
.warns { width: 14px; margin: 39px 0 0 8px; }
.warns i { display: block; width: 14px; height: 14px; border: 1px solid #333; box-shadow: inset 0 0 0 1px #fff; background: #f98c8c; margin-top: 2px; }
.c3 { margin-top: 9px; }
.warns .w2 { background: #ff9696; margin-top: 1px; }
.btns { margin-left: 15px; display: flex; flex-direction: column; }
button { width: 116px; height: 27px; margin: 0 0 7px; padding: 0; border: 1px solid #707070; border-radius: 14px; background: none; color: #f0f0f0; font: 12px/23px "Noto Sans", sans-serif; }
button.ok { border: 1.5px solid #b4b4b4; height: 27px; }
button.add { margin: 7px 0 15px; }
button.lib { letter-spacing: -.25px; }
.values { display: flex; padding-top: 5px; }
.vl { width: 111px; }
.vrow { display: flex; align-items: center; height: 22px; margin-bottom: 5px; }
.vrow.gapd { margin-top: 9px; }
.vrow s { width: 13px; height: 13px; border: 1px solid #888; border-radius: 50%; background: #474747; margin-left: 1px; }
.vrow s.on { border: 4px solid #dcdcdc; background: #222; }
.vrow label { width: 26px; padding-left: 6px; color: #e0e0e0; }
.vin { width: 34px; height: 22px; margin-left: 5px; border: 1px solid #686868; background: #454545; color: #f0f0f0; line-height: 20px; padding-left: 5px; }
.nudge .vin, .vin.wide { margin-left: 6px; }
.vin.wide { width: 43px; }
.vrow u { margin-left: 7px; padding-top: 2px; color: #c8c8c8; font-size: 13px; }
.vr .vrow label { width: 25px; }
.cm { padding-left: 14px; }
.vr .cm label { width: 25px; padding: 0; text-align: right; padding-right: 1px; color: #c8c8c8; }
.vr .cm .vin { margin-left: 6px; }
.hex { display: flex; margin-top: 9px; height: 22px; align-items: center; }
.hex label { width: 18px; padding-left: 2px; }
.hex div { width: 79px; height: 22px; border: 1px solid #686868; background: #454545; color: #f0f0f0; line-height: 19px; padding-left: 4px; }
</style>

<style>
body { margin: 0; background: #535353; }
</style>
